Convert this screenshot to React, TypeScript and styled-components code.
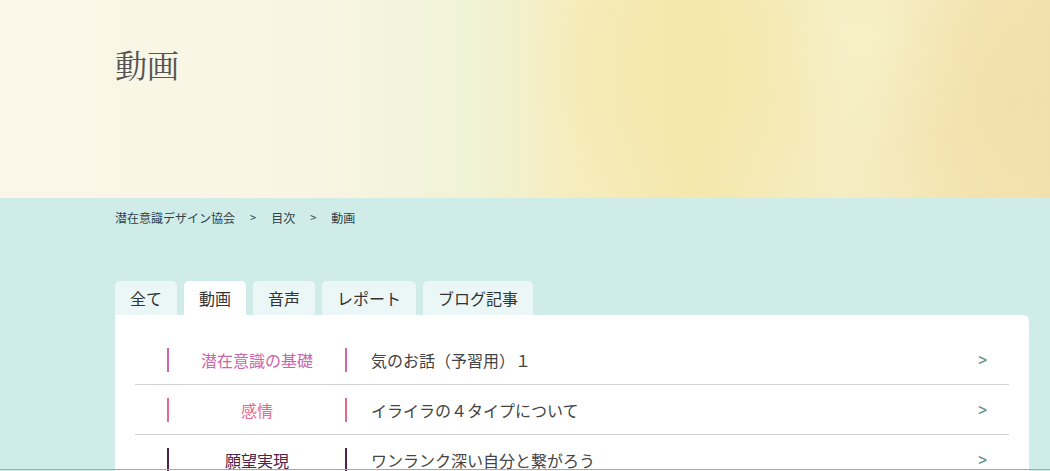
import React from "react";
import styled, { createGlobalStyle } from "styled-components";

const Global = createGlobalStyle`
  html, body { margin: 0; padding: 0; }
  body {
    background: #d0ece8;
    font-family: "Noto Sans CJK JP", "Noto Sans", sans-serif;
    color: #444;
    overflow: hidden;
  }
`;

const Page = styled.div`
  width: 1050px;
  min-height: 471px;
  background: #d0ece8;
`;

const Hero = styled.header`
  height: 198px;
  box-sizing: border-box;
  padding: 40px 0 0 115px;
  background:
    radial-gradient(ellipse 160px 140px at 690px 70px, rgba(244,232,170,0.9), rgba(244,232,170,0) 100%),
    radial-gradient(ellipse 140px 180px at 1010px 100px, rgba(242,224,170,0.95), rgba(242,224,170,0) 100%),
    radial-gradient(ellipse 120px 120px at 870px 40px, rgba(246,240,200,0.9), rgba(246,240,200,0) 100%),
    linear-gradient(90deg, #faf7e9 0%, #f8f5e2 30%, #eff3d6 45%, #f6ecbd 55%, #f4e7ad 66%, #f5edc3 80%, #f4e5b5 92%, #f2e0ae 100%);
`;

const Title = styled.h1`
  margin: 0;
  font-family: "Noto Serif CJK JP", "Liberation Serif", serif;
  font-weight: 400;
  font-size: 32px;
  line-height: 48px;
  color: #555;
`;

const Crumbs = styled.nav`
  display: flex;
  align-items: center;
  height: 38px;
  padding-left: 115px;
  font-size: 12px;
  color: #2f3f48;
`;

const Sep = styled.span`
  margin: 0 15px;
  font-size: 11px;
`;

const Tabs = styled.div`
  display: flex;
  gap: 7px;
  margin: 45px 0 0 115px;
`;

const Tab = styled.div<{ $active?: boolean }>`
  height: 34px;
  padding: 0 15px;
  display: flex;
  align-items: center;
  border-radius: 5px 5px 0 0;
  background: ${(p) => (p.$active ? "#ffffff" : "#eaf7f6")};
  font-size: 16px;
  color: #333;
`;

const Card = styled.section`
  margin-left: 115px;
  width: 914px;
  background: #fff;
  border-radius: 0 6px 0 0;
  padding: 20px 20px 0;
  box-sizing: border-box;
`;

const Row = styled.div`
  display: flex;
  align-items: center;
  box-sizing: border-box;
  height: 50px;
  border-bottom: 1px solid #d2d2d2;
  padding-left: 32px;
  padding-right: 22px;
`;

const Category = styled.div<{ $color: string }>`
  width: 180px;
  height: 24px;
  flex: none;
  box-sizing: border-box;
  display: flex;
  align-items: center;
  justify-content: center;
  border-left: 2px solid ${(p) => p.$color};
  border-right: 2px solid ${(p) => p.$color};
  color: ${(p) => p.$color};
  font-size: 16px;
`;

const ItemTitle = styled.div`
  flex: 1;
  padding-left: 24px;
  font-size: 16px;
  color: #444;
`;

const Arrow = styled.span`
  font-family: "Liberation Sans", sans-serif;
  font-size: 15px;
  color: #5b8e8a;
  -webkit-text-stroke: 0.3px #5b8e8a;
`;

const BottomLine = styled.div`
  position: fixed;
  left: 0;
  right: 0;
  bottom: 1px;
  height: 1px;
  background: #a8a8a8;
`;

const rows = [
  { cat: "潜在意識の基礎", color: "#cc66aa", title: "気のお話（予習用）１" },
  { cat: "感情", color: "#e8698c", title: "イライラの４タイプについて" },
  { cat: "願望実現", color: "#4d2347", title: "ワンランク深い自分と繋がろう" },
];

const tabs = ["全て", "動画", "音声", "レポート", "ブログ記事"];

export default function App() {
  return (
    <Page>
      <Global />
      <Hero>
        <Title>動画</Title>
      </Hero>
      <Crumbs>
        <span>潜在意識デザイン協会</span>
        <Sep>&gt;</Sep>
        <span>目次</span>
        <Sep>&gt;</Sep>
        <span>動画</span>
      </Crumbs>
      <Tabs>
        {tabs.map((t) => (
          <Tab key={t} $active={t === "動画"}>
            {t}
          </Tab>
        ))}
      </Tabs>
      <Card>
        {rows.map((r) => (
          <Row key={r.cat}>
            <Category $color={r.color}>{r.cat}</Category>
            <ItemTitle>{r.title}</ItemTitle>
            <Arrow>&gt;</Arrow>
          </Row>
        ))}
      </Card>
      <BottomLine />
    </Page>
  );
}
